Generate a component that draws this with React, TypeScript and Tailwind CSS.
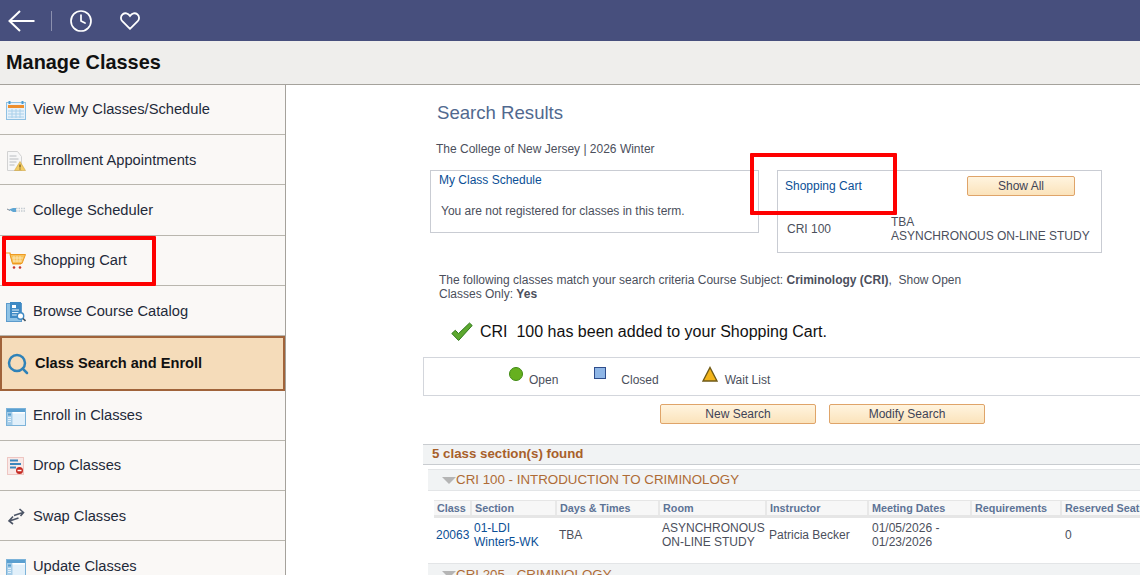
import type { ReactNode } from "react";
import { Clock, Search } from "lucide-react";

function BackArrow() {
  return (
    <svg width="28" height="24" viewBox="0 0 28 24" fill="none" stroke="#fff" strokeWidth="2" aria-hidden="true">
      <path d="M1.500 12H26.500" />
      <path d="M12 2L1.500 12L12 22" />
    </svg>
  );
}

function HeartOutline() {
  return (
    <svg width="20" height="18" viewBox="0 0 20 18" fill="none" stroke="#fff" strokeWidth="1.800" aria-hidden="true">
      <path d="M10 16.800L2.300 9.200C0.300 7.100 0.600 3.800 2.700 2.200C4.900 0.500 8 1 10 4C12 1 15.100 0.500 17.300 2.200C19.400 3.800 19.700 7.100 17.700 9.200Z" />
    </svg>
  );
}

function CalendarIcon() {
  return (
    <svg width="20" height="20" viewBox="0 0 20 20" aria-hidden="true">
      <rect x="0.500" y="2.500" width="19" height="17" fill="#e6f1fa" stroke="#8fc1e3" />
      <rect x="2" y="5" width="16" height="3" fill="#ee8f2e" />
      <path d="M2 11h16M2 14h16M2 17h16M6 9v9M10 9v9M14 9v9" stroke="#a9d0ea" strokeWidth="1" />
      <path d="M3.500 1v3M16.500 1v3" stroke="#4a9bd0" strokeWidth="2" />
    </svg>
  );
}

function AppointmentIcon() {
  return (
    <svg width="20" height="20" viewBox="0 0 20 20" aria-hidden="true">
      <path d="M1.500 0.500h10l4 5v14h-14z" fill="#f7f7f7" stroke="#d2d2d2" />
      <path d="M3.500 5h7M3.500 8h9M3.500 11h7M3.500 14h5" stroke="#b9bcc0" strokeWidth="1" />
      <path d="M14 10.500l5.500 9h-11z" fill="#f3cc64" stroke="#c89a2c" strokeWidth="0.500" />
      <path d="M14 13.500v3M14 17.500v1" stroke="#4d3a10" strokeWidth="1" />
    </svg>
  );
}

function SchedulerIcon() {
  return (
    <svg width="20" height="20" viewBox="0 0 20 20" aria-hidden="true">
      <path d="M1 9l3 1.500" stroke="#7d8a96" strokeWidth="1" />
      <path d="M3 9.500l4-1.500h3v4H7z" fill="#5fa6d3" />
      <path d="M10 8.500h9M10 11h9" stroke="#c5ccd2" strokeWidth="1.500" strokeDasharray="1.500 1" />
    </svg>
  );
}

function CartIcon() {
  return (
    <svg width="20" height="20" viewBox="0 0 20 20" aria-hidden="true">
      <path d="M0 2h4l3 11h8" fill="none" stroke="#f09a1e" strokeWidth="1.200" />
      <path d="M4 3.500h15.500l-3.500 9H6.500z" fill="#f7c35c" stroke="#ee9a22" strokeWidth="1" />
      <path d="M8 5v6M11 5v6M14 5v6M6 7h11M7 10h9" stroke="#fdeac0" strokeWidth="0.800" />
      <circle cx="8" cy="16.500" r="1.300" fill="#c8382e" />
      <circle cx="14" cy="16.500" r="1.300" fill="#c8382e" />
    </svg>
  );
}

function CatalogIcon() {
  return (
    <svg width="20" height="20" viewBox="0 0 20 20" aria-hidden="true">
      <rect x="0.500" y="1.500" width="15" height="18" fill="#8fc3e6" stroke="#5c9bcc" />
      <path d="M4 0h11v16H4z" fill="#3f8ac4" />
      <path d="M6 3h4v3H6z" fill="#fff" />
      <path d="M6 8h7M6 10.500h7M6 13h5" stroke="#e3f1fa" strokeWidth="1" />
      <circle cx="14.500" cy="14" r="3.200" fill="#fff" stroke="#3f8ac4" strokeWidth="1.400" />
      <path d="M17 16.500l2.500 2.500" stroke="#43535f" strokeWidth="1.600" />
    </svg>
  );
}

function WindowIcon() {
  return (
    <svg width="20" height="20" viewBox="0 0 20 20" aria-hidden="true">
      <rect x="0.500" y="2.500" width="19" height="17" fill="#e2f0fa" stroke="#7cb3d9" />
      <rect x="1" y="3" width="18" height="3" fill="#5a9fd0" />
      <rect x="1" y="6" width="5.500" height="13" fill="#a6cde8" />
      <rect x="2" y="7.500" width="3" height="2" fill="#5a9fd0" />
      <path d="M2 11.500h3M2 13.500h3M2 15.500h3" stroke="#e2f0fa" strokeWidth="1" />
      <rect x="6.500" y="6" width="12.500" height="1.500" fill="#fff" />
    </svg>
  );
}

function DropIcon() {
  return (
    <svg width="20" height="20" viewBox="0 0 20 20" aria-hidden="true">
      <rect x="1.500" y="1.500" width="16" height="17" fill="#f9e9e7" stroke="#e39a94" strokeDasharray="1 1" />
      <path d="M4 4.500h8" stroke="#3b86bd" strokeWidth="2" />
      <path d="M4 8h11" stroke="#3b86bd" strokeWidth="2" />
      <path d="M4 11.500h6" stroke="#3b86bd" strokeWidth="2" />
      <circle cx="13.500" cy="14.500" r="3.500" fill="#c62a22" />
      <path d="M11.500 14.500h4" stroke="#fff" strokeWidth="1.500" />
    </svg>
  );
}

function SwapIcon() {
  return (
    <svg width="20" height="20" viewBox="0 0 20 20" fill="none" stroke="#4c5566" strokeWidth="1.600" aria-hidden="true">
      <path d="M8 8.500l9-3M13.500 2l4 3.500-3 3.500" />
      <path d="M3.500 14l9-3M7 9.500l-4 4.500 4 3" />
    </svg>
  );
}

function GreenCheck() {
  return (
    <svg width="22" height="20" viewBox="0 0 22 20" aria-hidden="true">
      <path d="M0.800 11.500l3.500-3.200 3.200 3.300L18.500 1l2.700 2.500L7.600 18.500z" fill="#5da82f" stroke="#2f7a1c" strokeWidth="1" />
    </svg>
  );
}

const navItems = [
  { label: "View My Classes/Schedule", icon: <CalendarIcon />, h: "h-[50px]", pt: "" },
  { label: "Enrollment Appointments", icon: <AppointmentIcon />, h: "h-[50px]", pt: "pt-[2px]" },
  { label: "College Scheduler", icon: <SchedulerIcon />, h: "h-[51px]", pt: "" },
  { label: "Shopping Cart", icon: <CartIcon />, h: "h-[50px]", pt: "" },
  { label: "Browse Course Catalog", icon: <CatalogIcon />, h: "h-[50px]", pt: "pt-[2px]" },
];

const navItemsAfter = [
  { label: "Enroll in Classes", icon: <WindowIcon />, h: "h-[50px]", pt: "" },
  { label: "Drop Classes", icon: <DropIcon />, h: "h-[50px]", pt: "" },
  { label: "Swap Classes", icon: <SwapIcon />, h: "h-[50px]", pt: "pt-[2px]" },
  { label: "Update Classes", icon: <WindowIcon />, h: "h-[50px]", pt: "pt-[2px]" },
];

function NavRow({ label, icon, h, pt }: { label: string; icon: ReactNode; h: string; pt: string }) {
  return (
    <div className={`${h} ${pt} flex items-center gap-[7px] border-b border-[#b9b6ae] pl-[6px] text-[14.700px] text-[#1f2a3a]`}>
      <span className="flex w-[20px] shrink-0 items-center justify-center">{icon}</span>
      <span>{label}</span>
    </div>
  );
}

function PsButton({ label, w }: { label: string; w: string }) {
  return (
    <div className={`${w} flex h-[20px] items-center justify-center rounded-[2px] border border-[#dfa469] bg-gradient-to-b from-[#fff4df] to-[#fbe3bb] text-[12px] text-[#3f4356]`}>
      {label}
    </div>
  );
}

const columns = [
  { label: "Class", w: "w-[38px]" },
  { label: "Section", w: "w-[85px]" },
  { label: "Days & Times", w: "w-[103px]" },
  { label: "Room", w: "w-[107px]" },
  { label: "Instructor", w: "w-[102px]" },
  { label: "Meeting Dates", w: "w-[103px]" },
  { label: "Requirements", w: "w-[90px]" },
  { label: "Reserved Seats", w: "w-[100px]" },
];

export default function App() {
  return (
    <div className="relative h-[575px] w-[1140px] overflow-hidden bg-white font-['Liberation_Sans',Arial,sans-serif]">
      {/* Top bar */}
      <div className="flex h-[41px] items-center bg-[#474f7d] pl-[8px] text-white">
        <BackArrow />
        <div className="ml-[15px] h-[20px] w-px bg-[#8b90ae]" />
        <Clock size={24} strokeWidth={1.700} className="ml-[17px]" />
        <div className="ml-[27px]">
          <HeartOutline />
        </div>
      </div>

      {/* Title */}
      <div className="flex h-[44px] items-center border-b border-[#a5a29c] bg-[#efeeec] pl-[6px]">
        <h1 className="text-[19.900px] font-bold text-[#111]">Manage Classes</h1>
      </div>

      <div className="flex">
        {/* Sidebar */}
        <aside className="h-[490px] w-[286px] shrink-0 border-r border-[#a5a29c] bg-[#faf8f6]">
          {navItems.map((item) => (
            <NavRow key={item.label} {...item} />
          ))}
          <div className="flex h-[55px] items-center gap-[5px] border-2 border-[#a0633a] bg-[#f5dcba] pl-[4px] text-[14.600px] font-bold text-[#111]">
            <Search size={24} strokeWidth={2.500} className="text-[#2f82b8]" />
            <span>Class Search and Enroll</span>
          </div>
          {navItemsAfter.map((item) => (
            <NavRow key={item.label} {...item} />
          ))}
        </aside>

        {/* Main */}
        <main className="min-w-0 flex-1 overflow-hidden pl-[137px] text-[12px] text-[#4b4f5c]">
          <h2 className="mt-[16px] pl-[14px] text-[18.600px] leading-[24px] text-[#51698f]">Search Results</h2>
          <p className="mt-[17px] pl-[13px] leading-[14px]">The College of New Jersey | 2026 Winter</p>

          <div className="mt-[14px] flex items-start">
            <div className="ml-[7px] h-[63px] w-[329px] border border-[#c9ccd3] pl-[8px]">
              <p className="mt-[2px] leading-[14px] text-[#0b4f96]">My Class Schedule</p>
              <p className="mt-[17px] pl-[2px] leading-[14px]">You are not registered for classes in this term.</p>
            </div>
            <div className="ml-[18px] h-[83px] w-[325px] border border-[#c9ccd3]">
              <div className="flex items-start justify-between pr-[26px] pl-[7px] pt-[5px]">
                <span className="mt-[3px] leading-[14px] text-[#0b4f96]">Shopping Cart</span>
                <PsButton label="Show All" w="w-[108px]" />
              </div>
              <div className="mt-[19px] flex items-center pl-[9px] leading-[14px]">
                <span className="w-[104px]">CRI 100</span>
                <span>
                  TBA
                  <br />
                  ASYNCHRONOUS ON-LINE STUDY
                </span>
              </div>
            </div>
          </div>

          <p className="mt-[20px] w-[560px] pl-[16px] leading-[14px]">
            The following classes match your search criteria Course Subject: <b>Criminology (CRI)</b>,&nbsp; Show Open Classes Only: <b>Yes</b>
          </p>

          <div className="mt-[19px] flex items-center pl-[28px] text-[16px] text-[#111]">
            <GreenCheck />
            <span className="ml-[7px] whitespace-pre">CRI  100 has been added to your Shopping Cart.</span>
          </div>

          <div className="mt-[13px] flex h-[39px] items-start border border-r-0 border-[#d3d6dc] pl-[85px]">
            <span className="mt-[9px] h-[14px] w-[14px] rounded-full border border-[#3f8a12] bg-[#66b01f]" />
            <span className="ml-[6px] mt-[15px] leading-[14px]">Open</span>
            <span className="ml-[36px] mt-[9px] h-[12px] w-[12px] border border-[#2f4d8c] bg-[#8fb6e6]" />
            <span className="ml-[15px] mt-[15px] leading-[14px]">Closed</span>
            <svg width="16" height="16" viewBox="0 0 16 16" className="ml-[43px] mt-[8px]" aria-hidden="true">
              <path d="M8 1.500L15 15H1z" fill="#f2b41b" stroke="#6f5a17" strokeWidth="1.400" />
            </svg>
            <span className="ml-[7px] mt-[15px] leading-[14px]">Wait List</span>
          </div>

          <div className="mt-[8px] flex gap-[13px] pl-[237px]">
            <PsButton label="New Search" w="w-[156px]" />
            <PsButton label="Modify Search" w="w-[156px]" />
          </div>

          <div className="mt-[20px] flex h-[21px] items-center border-y border-[#c9ccd0] bg-[#f1f3f4] pb-[1px] pl-[9px] text-[13.300px] font-bold text-[#a8602a]">
            5 class section(s) found
          </div>

          <div className="ml-[5px] mt-[4px] flex h-[22px] items-center border-y border-[#e3e5e7] bg-[#f1f3f4] pl-[14px] text-[13.330px] text-[#ae6b36]">
            <span className="h-0 w-0 border-x-[7px] border-t-[7px] border-x-transparent border-t-[#b5b5b5]" />
            <span>CRI 100 - INTRODUCTION TO CRIMINOLOGY</span>
          </div>

          <div className="ml-[11px] mt-[9px] flex h-[18px] w-[800px] border-y border-b-[3px] border-[#e6e6e6] bg-[#f7f7f7] text-[10.800px] font-bold text-[#5d7396]">
            {columns.map((c) => (
              <span key={c.label} className={`${c.w} flex shrink-0 items-center whitespace-nowrap border-r-2 border-[#e8e8e8] pl-[3px] pt-[1px]`}>
                {c.label}
              </span>
            ))}
          </div>

          <div className="ml-[11px] flex h-[45px] w-[800px] items-center pb-[12px] leading-[14px]">
            <span className="w-[38px] shrink-0 pl-[2px] text-[#0b4f96]">20063</span>
            <span className="w-[85px] shrink-0 pl-[2px] text-[#0b4f96]">
              01-LDI
              <br />
              Winter5-WK
            </span>
            <span className="w-[103px] shrink-0 pl-[2px]">TBA</span>
            <span className="w-[107px] shrink-0 pl-[2px]">
              ASYNCHRONOUS
              <br />
              ON-LINE STUDY
            </span>
            <span className="w-[102px] shrink-0 pl-[2px]">Patricia Becker</span>
            <span className="w-[103px] shrink-0 pl-[3px]">
              01/05/2026 -
              <br />
              01/23/2026
            </span>
            <span className="w-[90px] shrink-0" />
            <span className="pl-[3px]">0</span>
          </div>

          <div className="ml-[5px] flex h-[22px] items-center border-t border-[#e3e5e7] bg-[#f1f3f4] pl-[14px] text-[13.330px] text-[#ae6b36]">
            <span className="h-0 w-0 border-x-[7px] border-t-[7px] border-x-transparent border-t-[#b5b5b5]" />
            <span>CRI 205 - CRIMINOLOGY</span>
          </div>
        </main>
      </div>

      {/* Annotation boxes drawn over the screenshot */}
      <div className="absolute left-[2px] top-[236px] h-[50px] w-[154px] rounded-[1px] border-[4px] border-[#fe0000]" />
      <div className="absolute left-[750px] top-[153px] h-[62px] w-[147px] rounded-[1px] border-[4px] border-[#fe0000]" />
    </div>
  );
}
